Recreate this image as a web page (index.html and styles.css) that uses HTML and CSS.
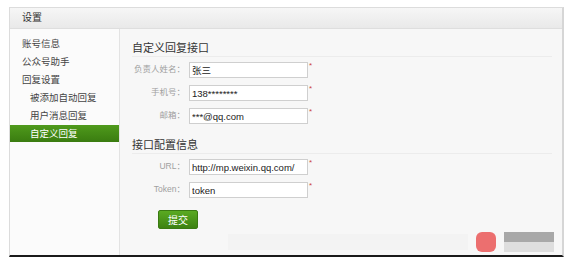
FILE: index.html
```html
<!DOCTYPE html>
<html lang="zh-CN">
<head>
    <meta charset="UTF-8">
    <title>设置</title>
    <link rel="stylesheet" href="styles.css">
</head>
<body>
    <div class="panel">
        <div class="panel-head">设置</div>
        <div class="panel-body">
            <ul class="side-nav">
                <li>账号信息</li>
                <li>公众号助手</li>
                <li>回复设置</li>
                <li class="sub">被添加自动回复</li>
                <li class="sub">用户消息回复</li>
                <li class="sub active">自定义回复</li>
            </ul>

            <div class="content">
                <h3 class="section-title">自定义回复接口</h3>
                <div class="form-row">
                    <label>负责人姓名：</label>
                    <input type="text" value="张三">
                    <span class="req">*</span>
                </div>
                <div class="form-row">
                    <label>手机号：</label>
                    <input type="text" value="138********">
                    <span class="req">*</span>
                </div>
                <div class="form-row">
                    <label>邮箱：</label>
                    <input type="text" value="***@qq.com">
                    <span class="req">*</span>
                </div>

                <h3 class="section-title second">接口配置信息</h3>
                <div class="form-row">
                    <label>URL：</label>
                    <input type="text" value="http://mp.weixin.qq.com/">
                    <span class="req">*</span>
                </div>
                <div class="form-row">
                    <label>Token：</label>
                    <input type="text" value="token">
                    <span class="req">*</span>
                </div>

                <button class="submit-btn" type="button">提交</button>
            </div>
        </div>
        <div class="watermark">
            <span class="wm-faint"></span>
            <span class="wm-blob"></span>
            <span class="wm-dots"></span>
        </div>
    </div>
</body>
</html>
```

FILE: styles.css
```css
body {
    margin: 0;
    padding: 0;
    background-color: #ffffff;
    font-family: "Liberation Sans", "Noto Sans CJK SC", sans-serif;
}

.panel {
    position: relative;
    margin: 7px 0 0 9px;
    width: 552px;
    height: 247px;
    border: 1px solid #dcdcdc;
    border-right: 2px solid #d6d6d6;
    border-bottom: 2px solid #1a1a1a;
    background-color: #f7f7f7;
    display: flex;
    flex-direction: column;
}

.panel-head {
    height: 20px;
    line-height: 20px;
    padding-left: 12px;
    font-size: 10px;
    color: #333;
    background: linear-gradient(#f6f6f6, #e9e9e9);
    border-bottom: 1px solid #dedede;
}

.panel-body {
    flex: 1;
    display: flex;
}

.side-nav {
    list-style: none;
    margin: 0;
    padding: 6px 0 0 0;
    width: 109px;
    background-color: #fbfbfb;
    border-right: 1px solid #e3e3e3;
}

.side-nav li {
    height: 18px;
    line-height: 18px;
    padding-left: 12px;
    font-size: 9.5px;
    color: #444;
}

.side-nav li.sub {
    padding-left: 20px;
}

.side-nav li.active {
    height: 17px;
    line-height: 17px;
    background: linear-gradient(#4f9a1c, #3a7c10);
    color: #ffffff;
}

.content {
    flex: 1;
    padding: 12px 10px 0 12px;
}

.section-title {
    margin: 0 0 5px 0;
    height: 14px;
    line-height: 14px;
    padding-bottom: 1px;
    font-size: 11px;
    font-weight: normal;
    color: #333;
    border-bottom: 1px solid #ececec;
}

.section-title.second {
    margin-top: 7px;
}

.form-row {
    display: flex;
    align-items: flex-start;
    height: 23px;
}

.form-row label {
    width: 53px;
    margin-right: 4px;
    line-height: 15px;
    font-size: 8.5px;
    white-space: nowrap;
    color: #a0a0a0;
    text-align: right;
}

.form-row input {
    box-sizing: border-box;
    width: 119px;
    height: 16px;
    margin: 0;
    padding: 0 2px;
    font-size: 9.5px;
    font-family: "Liberation Sans", "Noto Sans CJK SC", sans-serif;
    color: #222;
    background-color: #ffffff;
    border: 1px solid #cfcfcf;
}

.req {
    font-size: 8px;
    line-height: 8px;
    color: #c44;
    margin-left: 1px;
}

.submit-btn {
    margin: 5px 0 0 26px;
    width: 40px;
    height: 19px;
    padding: 0;
    font-size: 10px;
    font-family: "Liberation Sans", "Noto Sans CJK SC", sans-serif;
    color: #ffffff;
    background: linear-gradient(#5aaa22, #3d8212);
    border: 1px solid #3a7a12;
    border-radius: 2px;
}

.watermark {
    position: absolute;
    right: 8px;
    bottom: 3px;
    display: flex;
    align-items: center;
    gap: 8px;
}

.wm-faint {
    width: 240px;
    height: 16px;
    background-color: #f3f3f3;
}

.wm-blob {
    width: 20px;
    height: 20px;
    border-radius: 6px;
    background-color: #ec6f6f;
}

.wm-dots {
    width: 50px;
    height: 20px;
    background: linear-gradient(#a8a8a8 50%, #dedede 50%);
}
```
